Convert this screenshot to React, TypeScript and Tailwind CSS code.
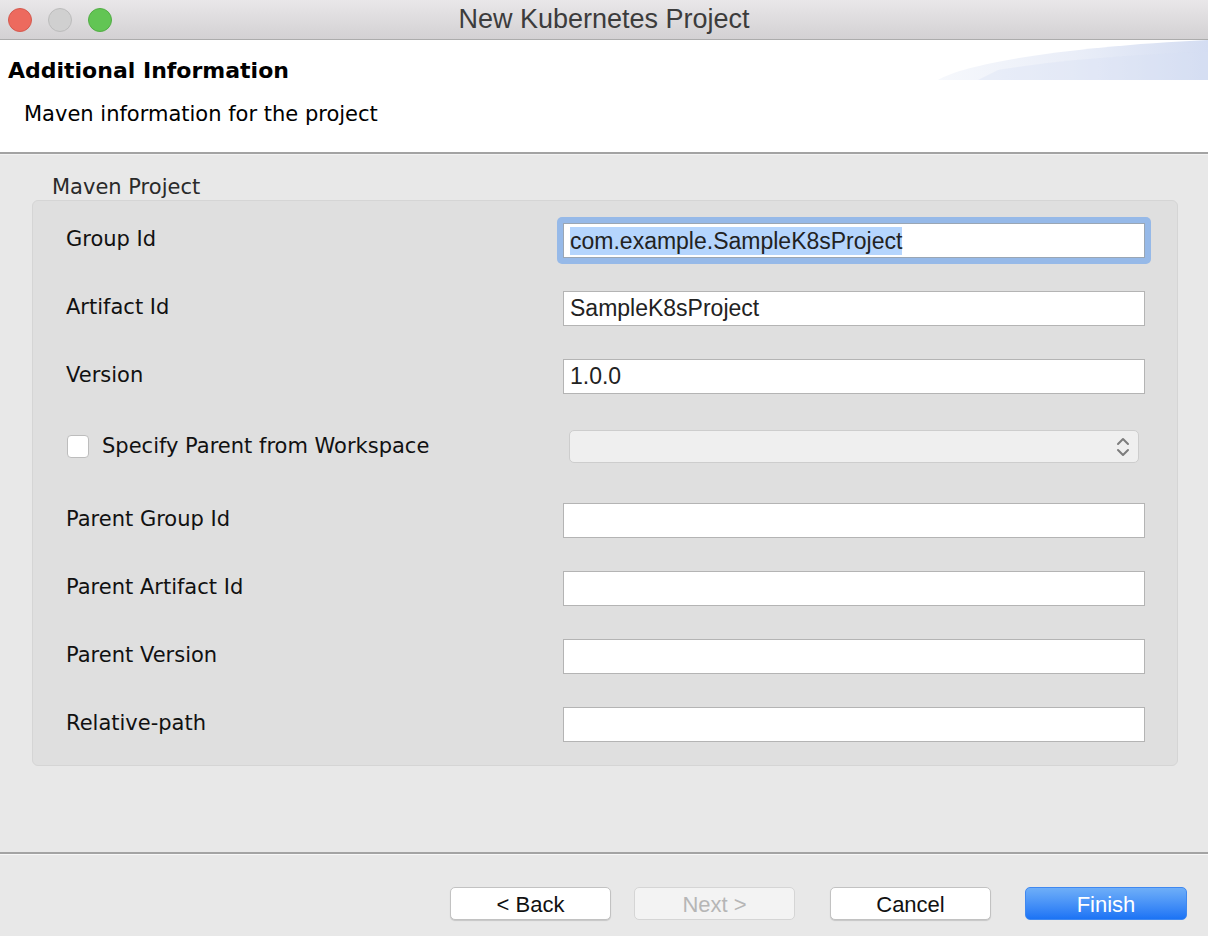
import React from "react";

const LABEL = { fontFamily: '"DejaVu Sans", "Liberation Sans", sans-serif' } as const;
const FIELD = { fontFamily: '"Liberation Sans", Arial, sans-serif' } as const;

function TextRow({ label, value, gap }: { label: string; value?: string; gap: string }) {
  return (
    <div className={`flex items-start ${gap}`}>
      <div className="w-[497px] text-[21px] leading-[26px] text-[#111] pt-[3px]" style={LABEL}>
        {label}
      </div>
      <div className="w-[582px] h-[35px] bg-white border border-[#b4b4b4] flex items-center px-[6px] text-[23px] text-[#222]" style={FIELD}>
        {value}
      </div>
    </div>
  );
}

export default function App() {
  return (
    <div className="w-[1208px] h-[936px] flex flex-col bg-[#e8e8e8] overflow-hidden">
      {/* Title bar */}
      <div className="h-[40px] shrink-0 bg-gradient-to-b from-[#e9e7e9] to-[#d3d1d3] border-b border-[#acacac] flex items-center relative">
        <div className="flex items-center gap-[16px] pl-[8px]">
          <div className="w-[24px] h-[24px] rounded-full bg-[#ed6a5e] border border-[#d45a4f]" />
          <div className="w-[24px] h-[24px] rounded-full bg-[#d0d0d0] border border-[#bcbcbc]" />
          <div className="w-[24px] h-[24px] rounded-full bg-[#62c554] border border-[#52ad45]" />
        </div>
        <div className="absolute inset-0 flex items-center justify-center text-[27px] text-[#3c3c3c]" style={FIELD}>
          New Kubernetes Project
        </div>
      </div>

      {/* Header */}
      <div className="h-[112px] shrink-0 bg-white relative overflow-hidden">
        <svg className="absolute right-0 top-0" width="270" height="40" viewBox="0 0 270 40">
          <defs>
            <linearGradient id="sw" x1="0" y1="0" x2="1" y2="0">
              <stop offset="0" stopColor="#f6f8fc" />
              <stop offset="0.5" stopColor="#eaeef8" />
              <stop offset="1" stopColor="#d4ddf2" />
            </linearGradient>
          </defs>
          <path d="M0 40 C 30 22, 140 6, 270 0 L 270 40 Z" fill="url(#sw)" />
          <path d="M60 30 C 120 20, 200 14, 270 12 L 270 40 L 40 40 Z" fill="#d8e0f3" opacity="0.35" />
        </svg>
        <div className="pl-[8px] pt-[17px] text-[22px] leading-[28px] font-bold text-black" style={LABEL}>
          Additional Information
        </div>
        <div className="pl-[24px] pt-[16px] text-[21px] leading-[26px] text-black" style={LABEL}>
          Maven information for the project
        </div>
      </div>
      <div className="h-[2px] shrink-0 bg-[#a3a3a3]" />
      <div className="h-[1px] shrink-0 bg-[#f2f2f2]" />

      {/* Body */}
      <div className="flex-1 px-[32px] pt-[19px]">
        <div className="pl-[20px] text-[21px] leading-[26px] text-[#2a2a2a]" style={LABEL}>
          Maven Project
        </div>
        <div className="w-[1146px] h-[566px] bg-[#dfdfdf] border border-[#d5d5d5] rounded-[6px] pl-[33px] pt-[22px]">
          {/* Group Id with focus ring */}
          <div className="flex items-start">
            <div className="w-[497px] text-[21px] leading-[26px] text-[#111] pt-[3px]" style={LABEL}>
              Group Id
            </div>
            <div className="relative w-[582px] h-[35px]">
              <div className="absolute -inset-[6px] rounded-[5px] bg-[#96b9e8]" />
              <div className="absolute inset-0 bg-white border border-[#9aa6b4] flex items-center px-[6px] text-[23px] text-[#222]" style={FIELD}>
                <span className="bg-[#b5d5fd] leading-[28px]">com.example.SampleK8sProject</span>
              </div>
            </div>
          </div>
          <TextRow label="Artifact Id" value="SampleK8sProject" gap="mt-[33px]" />
          <TextRow label="Version" value="1.0.0" gap="mt-[33px]" />

          {/* Checkbox + combo */}
          <div className="flex items-center mt-[36px] h-[33px]">
            <div className="w-[503px] flex items-center">
              <div className="ml-[1px] w-[22px] h-[23px] bg-white border border-[#bdbdbd] rounded-[4px]" />
              <span className="ml-[13px] text-[21px] text-[#111]" style={LABEL}>
                Specify Parent from Workspace
              </span>
            </div>
            <div className="w-[570px] h-[33px] bg-[#efefef] border border-[#cdcdcd] rounded-[5px] flex items-center justify-end pr-[8px]">
              <svg width="14" height="24" viewBox="0 0 14 24" fill="none" stroke="#7d7d7d" strokeWidth="2" strokeLinecap="round" strokeLinejoin="round">
                <path d="M2 9 L7 4 L12 9" />
                <path d="M2 15 L7 20 L12 15" />
              </svg>
            </div>
          </div>

          <TextRow label="Parent Group Id" gap="mt-[40px]" />
          <TextRow label="Parent Artifact Id" gap="mt-[33px]" />
          <TextRow label="Parent Version" gap="mt-[33px]" />
          <TextRow label="Relative-path" gap="mt-[33px]" />
        </div>
      </div>

      <div className="h-[2px] shrink-0 bg-[#a3a3a3]" />
      <div className="h-[1px] shrink-0 bg-[#f7f7f7]" />

      {/* Footer */}
      <div className="h-[81px] shrink-0 flex items-start pt-[32px] pl-[450px]" style={FIELD}>
        <button className="w-[161px] h-[33px] bg-white border border-[#c2c2c2] rounded-[5px] shadow-[0_1px_1px_rgba(0,0,0,0.15)] text-[22px] text-[#111]">
          &lt; Back
        </button>
        <button className="ml-[23px] w-[161px] h-[33px] bg-[#f3f3f3] border border-[#d5d5d5] rounded-[5px] text-[22px] text-[#b6b6b6]">
          Next &gt;
        </button>
        <button className="ml-[35px] w-[161px] h-[33px] bg-white border border-[#c2c2c2] rounded-[5px] shadow-[0_1px_1px_rgba(0,0,0,0.15)] text-[22px] text-[#111]">
          Cancel
        </button>
        <button className="ml-[34px] w-[162px] h-[33px] bg-gradient-to-b from-[#6eaef8] to-[#1b73f5] border border-[#3f88f0] rounded-[5px] text-[22px] text-white">
          Finish
        </button>
      </div>
    </div>
  );
}
